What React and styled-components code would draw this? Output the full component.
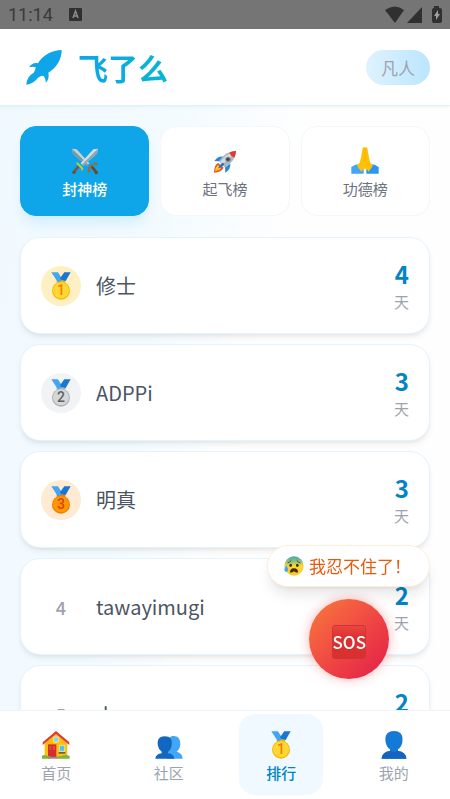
import React from 'react';
import styled, { createGlobalStyle, css } from 'styled-components';

const colors = {
  primary: '#0ea5e9',
  strong: '#0284c7',
  text: '#4b5563',
  muted: '#9ca3af',
};

const RocketLogo = () => (
  <svg width="36" height="36" viewBox="0 0 108 108" aria-hidden="true">
    <path
      fill="#0ea5e9"
      d="M107 3C80 4 50 17 36 43C25 40 15 45 9 55C16 52 24 53 29 55C29 61 26 66 23 72C10 78 2 91 1 107C15 105 27 98 36 86C41 82 46 80 52 80C57 86 60 93 59 101C67 93 70 83 67 71C93 55 107 30 107 3Z"
    />
  </svg>
);

const Swords = () => (
  <svg width="28" height="28" viewBox="0 0 84 84" aria-hidden="true">
    <path d="M3 5L17 7L55 49L48 56L6 20Z" fill="#c3d3d8" />
    <path d="M3 5L52 53L48 56L6 20Z" fill="#7d979f" />
    <path d="M81 5L67 7L29 49L36 56L78 20Z" fill="#d3dfe2" />
    <path d="M81 5L32 53L36 56L78 20Z" fill="#8fa5ac" />
    <path d="M22 58L8 76" stroke="#795548" strokeWidth="8" />
    <path d="M62 58L76 76" stroke="#6d4636" strokeWidth="8" />
    <path d="M16 50Q20 48 23 53L33 63Q35 67 31 68" stroke="#c0ca33" strokeWidth="6" fill="none" />
    <path d="M68 50Q79 48 77 55M65 53L53 65Q52 73 57 74" stroke="#a86423" strokeWidth="6" fill="none" />
    <circle cx="9" cy="76" r="5" fill="#6d4c41" />
    <circle cx="76" cy="77" r="5" fill="#6d4636" />
  </svg>
);

const Rocket = () => (
  <svg width="28" height="28" viewBox="0 0 84 84" aria-hidden="true">
    <path d="M37 29Q22 26 10 42L25 43ZM58 50Q60 65 43 77L42 61Z" fill="#1e88e5" />
    <path d="M22 48Q9 53 9 77Q31 75 38 62Z" fill="#f4511e" />
    <path d="M21 54Q13 60 12 73Q25 71 31 63Z" fill="#ffca28" />
    <path d="M75 12Q43 12 24 43L42 62Q73 43 75 12Z" fill="#b0b7bb" />
    <path d="M71 16Q42 22 28 45L34 51Q58 35 71 16Z" fill="#d6dadd" />
    <path d="M75 12Q64 11 55 17Q59 28 70 32Q75 23 75 12Z" fill="#e53935" />
    <circle cx="51" cy="37" r="8" fill="#78909c" />
    <circle cx="51" cy="37" r="5" fill="#37474f" />
    <path d="M36 47Q24 53 22 64Q35 61 40 51Z" fill="#1976d2" />
  </svg>
);

const Pray = () => (
  <svg width="28" height="28" viewBox="0 0 84 84" aria-hidden="true">
    <path d="M1 60Q12 51 27 51L38 66V80H1Z" fill="#42a5f5" />
    <path d="M83 60Q72 51 57 51L46 66V80H83Z" fill="#2996f3" />
    <path
      d="M35 3Q36 1 42 1Q48 1 49 3L53 27L58 48L66 54Q63 64 52 75Q50 65 42 65Q34 65 32 75Q21 64 18 54L26 48L31 27Z"
      fill="#ffc107"
    />
    <path d="M42 3V45" stroke="#f4a900" strokeWidth="2" />
  </svg>
);

const medals = {
  1: { disc: '#fdd835', rim: '#f9b800', digit: '#f57c00' },
  2: { disc: '#d5d7d9', rim: '#b0b3b6', digit: '#616161' },
  3: { disc: '#ff9800', rim: '#ef7d00', digit: '#d84315' },
};

const Medal = ({ place, size = 28 }) => (
  <svg width={size} height={size} viewBox="0 0 84 84" aria-hidden="true">
    <path d="M29 23H55V40H29Z" fill={medals[place].rim} />
    <path d="M13 1H33L47 23L36 30H32Z" fill="#42a5f5" />
    <path d="M52 1H71L56 27L43 24L39 19Z" fill="#1976d2" />
    <circle cx="42" cy="56" r="27" fill={medals[place].rim} />
    <circle cx="42" cy="55" r="24" fill={medals[place].disc} />
    <text
      x="42"
      y="70"
      textAnchor="middle"
      fontFamily="Roboto, sans-serif"
      fontWeight="500"
      fontSize="42"
      fill={medals[place].digit}
    >
      {place}
    </text>
  </svg>
);

const House = () => (
  <svg width="28" height="28" viewBox="0 0 84 84" aria-hidden="true">
    <path d="M8 37L42 7L76 37V78H8Z" fill="#ffc107" />
    <path d="M2 34L42 0L82 34V42L42 9L2 42Z" fill="#e53935" />
    <path d="M35 18H50V33H35Z" fill="#81d4fa" stroke="#fff3c4" strokeWidth="2" />
    <path d="M18 40H43V78H18Z" fill="#d32f2f" />
    <path d="M22 45H28V56H22ZM33 45H39V56H33Z" fill="#e84a42" />
    <path d="M52 43H68V61H52Z" fill="#4fc3f7" stroke="#fff3c4" strokeWidth="2" />
    <path d="M50 63H70V68H50Z" fill="#795548" />
    <path d="M0 83V75Q7 69 16 75H24V83ZM46 83V76H58Q69 69 83 75V83Z" fill="#7cb342" />
    <path d="M20 77H45L49 83H17Z" fill="#a1887f" />
  </svg>
);

const People = () => (
  <svg width="28" height="28" viewBox="0 0 84 84" aria-hidden="true">
    <path
      d="M53 15Q76 13 76 40Q75 55 65 62Q82 66 83 83H35V62Q38 15 53 15Z"
      fill="#42a5f5"
    />
    <path
      d="M29 16C10 16 6 29 9 45Q11 57 20 62V67Q2 69 1 83H58Q57 69 39 67V62Q49 56 50 43C53 25 46 16 29 16Z"
      fill="#1268c0"
    />
  </svg>
);

const Person = () => (
  <svg width="28" height="28" viewBox="0 0 84 84" aria-hidden="true">
    <path
      d="M42 0C19 0 14 16 17 34Q19 48 30 55V60Q6 63 5 83H79Q78 63 54 60V55Q65 48 67 34C70 16 65 0 42 0Z"
      fill="#1579d8"
    />
    <path d="M30 58Q42 67 54 58V60Q78 63 79 83H5Q6 63 30 60Z" fill="#1565c0" />
  </svg>
);

const AnxiousFace = () => (
  <svg width="20" height="20" viewBox="0 0 60 60" aria-hidden="true">
    <defs>
      <linearGradient id="face" x1="0" y1="0" x2="0" y2="1">
        <stop offset="0" stopColor="#42a8b8" />
        <stop offset=".28" stopColor="#8fc27a" />
        <stop offset=".5" stopColor="#fdd835" />
        <stop offset="1" stopColor="#f9c828" />
      </linearGradient>
    </defs>
    <circle cx="30" cy="30" r="29" fill="url(#face)" />
    <path d="M11 21Q17 19 22 13M38 13Q43 19 49 21" stroke="#5d4037" strokeWidth="3" fill="none" />
    <ellipse cx="20" cy="28" rx="4" ry="5" fill="#422b0d" />
    <ellipse cx="40" cy="28" rx="4" ry="5" fill="#422b0d" />
    <path d="M18 49Q18 37 30 37Q42 37 42 49Q36 51 30 46Q24 51 18 49Z" fill="#422b0d" />
    <path d="M7 28Q0 38 1 43Q3 49 9 47Q14 44 12 38Z" fill="#42a5f5" />
  </svg>
);

const StatusIcons = () => (
  <svg width="58" height="18" viewBox="0 0 58 18" fill="#303030" aria-hidden="true">
    <path d="M0 4Q10-3 19 4L10 17Z" />
    <path d="M22 17L37 1V17Z" />
    <path d="M49 2V0H54V2H55Q57 2 57 4V15Q57 17 55 17H49Q47 17 47 15V4Q47 2 49 2Z" />
    <path d="M53 4L49 10H51V14L55 8H53Z" fill="#a0a0a0" />
  </svg>
);

const KeyboardIcon = () => (
  <svg width="13" height="13" viewBox="0 0 13 13" aria-hidden="true">
    <rect width="13" height="13" rx="1" fill="#303030" />
    <path d="M4 10L6.500 3L9 10M5 8H8" stroke="#8a8a8a" strokeWidth="1.500" fill="none" />
  </svg>
);

const tabs = [
  { label: '封神榜', icon: <Swords />, active: true },
  { label: '起飞榜', icon: <Rocket /> },
  { label: '功德榜', icon: <Pray /> },
];

const ranking = [
  { name: '修士', days: 4 },
  { name: 'ADPPi', days: 3 },
  { name: '明真', days: 3 },
  { name: 'tawayimugi', days: 2 },
  { name: 'd', days: 2 },
];

const links = [
  { label: '首页', href: '#home', icon: <House /> },
  { label: '社区', href: '#community', icon: <People /> },
  { label: '排行', href: '#ranking', icon: <Medal place={1} />, active: true },
  { label: '我的', href: '#me', icon: <Person /> },
];

const App = () => (
  <Container>
    <GlobalStyle />
    <StatusBar>
      <Clock>11:14</Clock>
      <KeyboardIcon />
      <StatusRight>
        <StatusIcons />
      </StatusRight>
    </StatusBar>
    <Header>
      <RocketLogo />
      <Title>飞了么</Title>
      <Level>凡人</Level>
    </Header>
    <Content>
      <Tabs>
        {tabs.map(tab => (
          <Tab key={tab.label} type="button" $active={tab.active}>
            {tab.icon}
            {tab.label}
          </Tab>
        ))}
      </Tabs>
      <RankList>
        {ranking.map((user, index) => (
          <RankCard key={user.name}>
            <Place $place={index + 1}>
              {index < 3 ? <Medal place={index + 1} /> : index + 1}
            </Place>
            <Name>{user.name}</Name>
            <Score>
              <Days>{user.days}</Days>
              <Unit>天</Unit>
            </Score>
          </RankCard>
        ))}
      </RankList>
    </Content>
    <Floating>
      <Bubble>
        <AnxiousFace />
        我忍不住了！
      </Bubble>
      <SosButton type="button">
        <SosTile>SOS</SosTile>
      </SosButton>
    </Floating>
    <BottomNav>
      {links.map(link => (
        <NavItem key={link.label} href={link.href} $active={link.active}>
          {link.icon}
          {link.label}
        </NavItem>
      ))}
    </BottomNav>
  </Container>
);

const GlobalStyle = createGlobalStyle`
  * {
    box-sizing: border-box;
  }

  body {
    margin: 0;
    font-family: 'Noto Sans CJK SC', 'Noto Sans', sans-serif;
  }

  svg {
    display: block;
    flex-shrink: 0;
  }
`;

const Container = styled.div`
  display: flex;
  flex-direction: column;
  height: 100vh;
  overflow: hidden;
  background: linear-gradient(100deg, #f0f9ff 0%, #f4fbff 35%, #fefefe 55%);
`;

const StatusBar = styled.div`
  display: flex;
  align-items: center;
  flex-shrink: 0;
  gap: 16px;
  height: 29px;
  padding: 0 7px 0 8px;
  background: #757575;
`;

const Clock = styled.span`
  color: #3a3a3a;
  font-family: Roboto, sans-serif;
  font-size: 18px;
  line-height: 24px;
`;

const StatusRight = styled.div`
  margin-left: auto;
`;

const Header = styled.header`
  display: flex;
  align-items: center;
  flex-shrink: 0;
  height: 77px;
  padding: 0 20px 0 26px;
  background: #fff;
  border-bottom: 1px solid #e0f2fe;
  box-shadow: 0 1px 3px rgba(14, 116, 180, 0.08);
`;

const Title = styled.h1`
  margin: 0 auto 0 16px;
  background: linear-gradient(90deg, #0ea5e9, #06b6d4);
  background-clip: text;
  color: transparent;
  font-size: 30px;
  font-weight: 700;
  line-height: 40px;
`;

const Level = styled.span`
  padding: 4px 15px;
  border-radius: 18px;
  background: linear-gradient(90deg, #e0f2fe, #bae6fd);
  color: ${colors.muted};
  font-size: 17px;
  line-height: 27px;
`;

const Content = styled.main`
  flex: 1;
  min-height: 0;
  padding: 20px 20px 0;
  overflow: hidden;
`;

const Tabs = styled.div`
  display: grid;
  grid-template-columns: repeat(3, 1fr);
  gap: 11px;
  margin-bottom: 21px;
`;

const Tab = styled.button`
  display: flex;
  flex-direction: column;
  align-items: center;
  gap: 4px;
  padding: 20px 0 16px;
  border: 1px solid #f3f7fa;
  border-radius: 16px;
  background: #fff;
  color: #6b7280;
  font-family: inherit;
  font-size: 15px;
  font-weight: 400;
  line-height: 20px;

  ${props =>
    props.$active &&
    css`
      border-color: ${colors.primary};
      background: ${colors.primary};
      box-shadow: 0 10px 15px -3px #d3edfd, 0 4px 6px -4px #c6e8fb;
      color: #fff;
      font-weight: 500;
    `};
`;

const RankList = styled.ol`
  display: flex;
  flex-direction: column;
  gap: 10px;
  margin: 0;
  padding: 0;
  list-style: none;
`;

const RankCard = styled.li`
  display: flex;
  align-items: center;
  gap: 15px;
  padding: 20px;
  border: 1px solid #e4f3fd;
  border-radius: 20px;
  background: #fff;
  box-shadow: 0 4px 6px -1px rgba(0, 0, 0, 0.07), 0 2px 4px -2px rgba(0, 0, 0, 0.07);
`;

const placeColors = { 1: '#fef0c3', 2: '#f1f3f5', 3: '#ffebd3' };

const Place = styled.span`
  display: flex;
  align-items: center;
  justify-content: center;
  width: 40px;
  height: 40px;
  border-radius: 50%;
  background: ${props => placeColors[props.$place] || 'transparent'};
  color: ${colors.muted};
  font-size: 18px;
  font-weight: 500;
`;

const Name = styled.span`
  flex: 1;
  color: ${colors.text};
  font-size: 20px;
  line-height: 28px;
`;

const Score = styled.div`
  text-align: right;
`;

const Days = styled.div`
  color: ${colors.strong};
  font-size: 24px;
  font-weight: 700;
  line-height: 32px;
`;

const Unit = styled.div`
  color: ${colors.muted};
  font-size: 15px;
  line-height: 23px;
`;

const Floating = styled.div`
  position: fixed;
  right: 20px;
  bottom: 120px;
  display: flex;
  flex-direction: column;
  align-items: center;
  gap: 12px;
`;

const Bubble = styled.div`
  display: flex;
  align-items: center;
  gap: 5px;
  padding: 8px 18px 8px 16px;
  border: 1px solid #ffedd5;
  border-radius: 21px;
  background: #fff;
  box-shadow: 0 10px 15px -3px rgba(0, 0, 0, 0.1), 0 4px 6px -4px rgba(0, 0, 0, 0.1);
  color: #ea580c;
  font-size: 17px;
  font-weight: 400;
  line-height: 24px;
`;

const SosButton = styled.button`
  display: flex;
  align-items: center;
  justify-content: center;
  width: 80px;
  height: 80px;
  padding: 5px 0 0;
  border: 0;
  border-radius: 50%;
  background: linear-gradient(135deg, #f97b3c 0%, #ef4444 55%, #e11d48 100%);
  box-shadow: 0 0 12px rgba(239, 68, 68, 0.4);
`;

const SosTile = styled.span`
  width: 34px;
  border: 1px solid #d03434;
  border-radius: 3px;
  background: linear-gradient(#ea4543, #d93030 40%);
  color: #fff;
  font-family: 'Noto Sans CJK SC', 'Noto Sans', sans-serif;
  font-size: 17px;
  font-weight: 500;
  line-height: 32px;
  text-align: center;
`;

const BottomNav = styled.nav`
  display: grid;
  grid-template-columns: repeat(4, 1fr);
  flex-shrink: 0;
  justify-items: center;
  padding: 3px 0 4px;
  border-top: 1px solid #f0f4f7;
  background: #fff;
`;

const NavItem = styled.a`
  display: flex;
  flex-direction: column;
  align-items: center;
  gap: 4px;
  width: 84px;
  padding: 17px 0 12px;
  border-radius: 16px;
  background: ${props => (props.$active ? '#f0f9ff' : 'transparent')};
  color: ${props => (props.$active ? colors.strong : colors.muted)};
  font-size: 15px;
  font-weight: ${props => (props.$active ? 500 : 400)};
  line-height: 20px;
  text-decoration: none;
`;

export default App;
